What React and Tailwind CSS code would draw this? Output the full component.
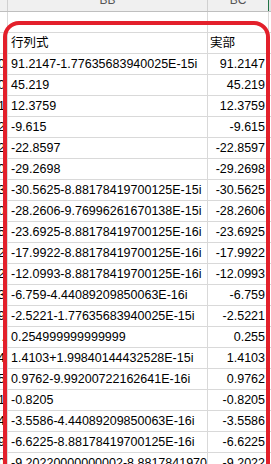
import React from 'react';

const rows = [
    ['', '', ''],
    ['', '行列式', '実部', true],
    ['0', '91.2147-1.77635683940025E-15i', '91.2147'],
    ['0', '45.219', '45.219'],
    ['1', '12.3759', '12.3759'],
    ['2', '-9.615', '-9.615'],
    ['2', '-22.8597', '-22.8597'],
    ['0', '-29.2698', '-29.2698'],
    ['3', '-30.5625-8.88178419700125E-15i', '-30.5625'],
    ['0', '-28.2606-9.76996261670138E-15i', '-28.2606'],
    ['5', '-23.6925-8.88178419700125E-16i', '-23.6925'],
    ['2', '-17.9922-8.88178419700125E-16i', '-17.9922'],
    ['2', '-12.0993-8.88178419700125E-16i', '-12.0993'],
    ['3', '-6.759-4.44089209850063E-16i', '-6.759'],
    ['9', '-2.5221-1.77635683940025E-15i', '-2.5221'],
    ['.', '0.254999999999999', '0.255'],
    ['4', '1.4103+1.99840144432528E-15i', '1.4103'],
    ['5', '0.9762-9.99200722162641E-16i', '0.9762'],
    ['1', '-0.8205', '-0.8205'],
    ['4', '-3.5586-4.44089209850063E-16i', '-3.5586'],
    ['9', '-6.6225-8.88178419700125E-16i', '-6.6225'],
    ['0', '-9.20220000000002-8.88178419700125E-16i', '-9.2022'],
];

export default function App() {
    return (
        <div
            className="relative w-[271px] h-[464px] overflow-hidden bg-white text-black"
            style={{ fontFamily: '"Liberation Sans", "Noto Sans CJK JP", sans-serif' }}
        >
            {/* Column headers */}
            <div className="flex h-[12px] bg-[#f0f0f0] border-b border-[#bfbfbf] text-[12px] leading-[12px] text-[#555]">
                <div className="w-[8px] h-full border-r border-[#d0d0d0]" />
                <div className="w-[200px] h-full border-r border-[#d0d0d0] overflow-hidden text-center">
                    <span className="block -mt-[6px]">BB</span>
                </div>
                <div className="w-[61px] h-full border-r border-[#217346] overflow-hidden text-center">
                    <span className="block -mt-[6px]">BC</span>
                </div>
                <div className="w-[2px] h-full bg-[#e2e2e2]" />
            </div>

            {/* Cells */}
            {rows.map(([ba, bb, bc, head], i) => (
                <div key={i} className="flex h-[21px] text-[12.5px] leading-[20px] whitespace-nowrap">
                    <div className="w-[8px] h-full flex justify-end overflow-hidden border-r border-b border-[#d9d9d9] pr-[2px]">
                        {ba}
                    </div>
                    <div className="w-[200px] h-full overflow-hidden border-r border-b border-[#d9d9d9] pl-[3px]">
                        {bb}
                    </div>
                    <div
                        className={
                            head
                                ? 'w-[61px] h-full overflow-hidden border-r border-b border-[#d9d9d9] pl-[2px]'
                                : 'w-[61px] h-full flex justify-end overflow-hidden border-r border-b border-[#d9d9d9] pr-[3px]'
                        }
                    >
                        {bc}
                    </div>
                    <div className="w-[2px] h-full border-b border-[#d9d9d9]" />
                </div>
            ))}

            {/* Red annotation frame */}
            <div className="absolute left-[3px] top-[21px] w-[267px] h-[520px] border-4 border-[#e3202b] rounded-[16px] pointer-events-none" />
        </div>
    );
}
